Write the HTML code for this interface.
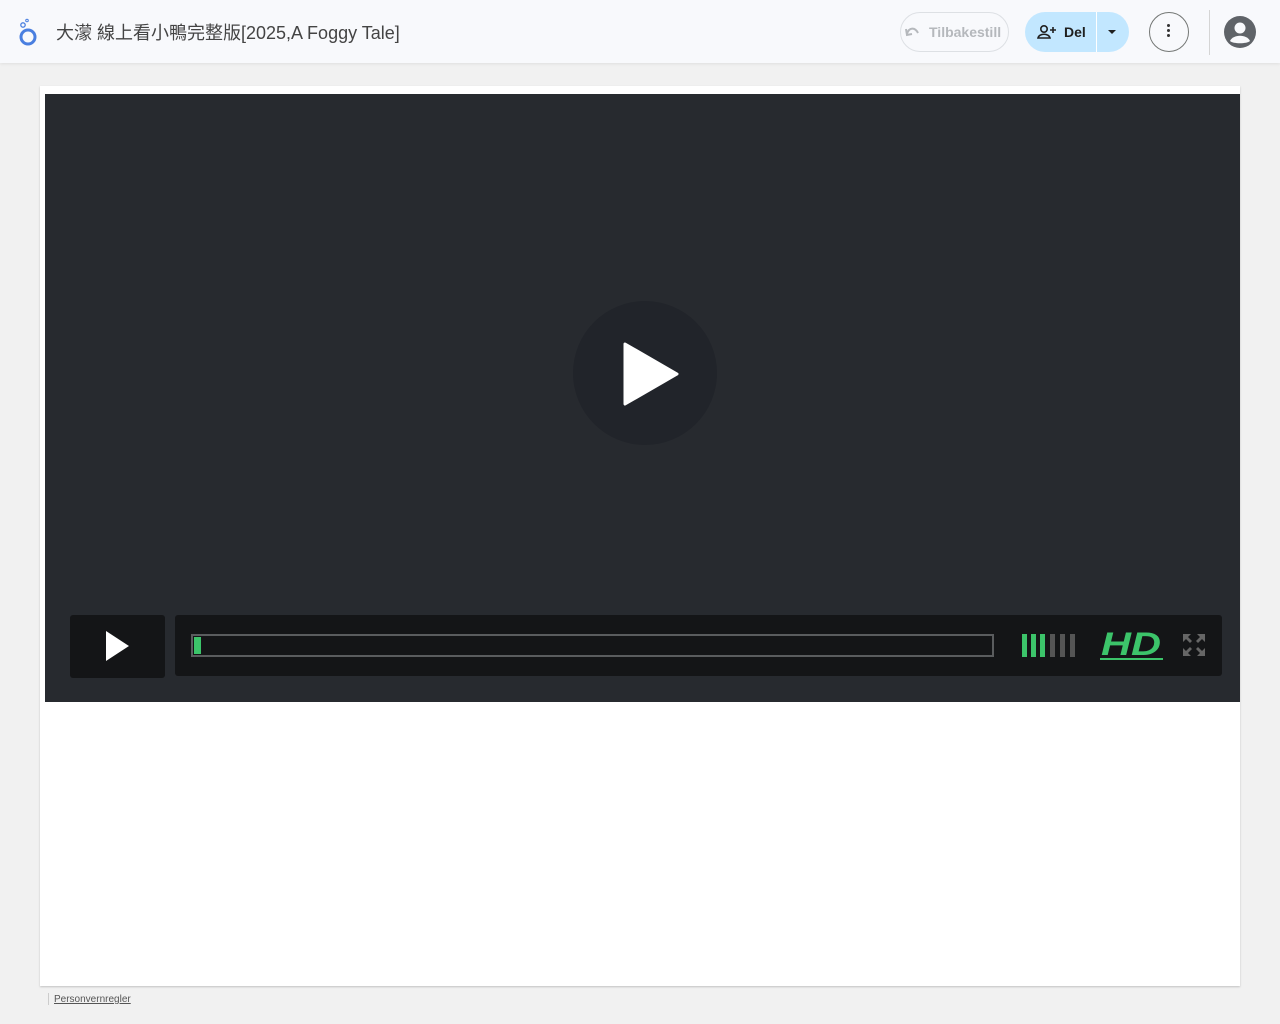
<!DOCTYPE html>
<html><head><meta charset="utf-8"><style>
body{margin:0;width:1280px;height:1024px;background:#f1f1f1;font-family:"Liberation Sans","Noto Sans CJK TC",sans-serif;position:relative;overflow:hidden}
.top{position:absolute;left:0;top:0;width:1280px;height:63px;background:#f8f9fc;box-shadow:0 1px 3px rgba(0,0,0,.08)}
.title{position:absolute;left:56px;top:19px;font-size:18px;color:#444}
.card{position:absolute;left:40px;top:86px;width:1200px;height:900px;background:#fff;box-shadow:0 1px 2px rgba(0,0,0,.2)}
.video{position:absolute;left:45px;top:94px;width:1195px;height:608px;background:#272a2f}
.abs{position:absolute}
</style></head><body>
<div class="top">
<svg class="abs" style="left:17px;top:17px" width="22" height="30" viewBox="0 0 22 30"><circle cx="11" cy="20" r="7" fill="none" stroke="#4a7fe0" stroke-width="3"/><circle cx="6" cy="8" r="2.2" fill="none" stroke="#4a7fe0" stroke-width="1.3"/><circle cx="10" cy="3.5" r="1.3" fill="none" stroke="#4a7fe0" stroke-width="1"/></svg>
<div class="title">大濛 線上看小鴨完整版[2025,A Foggy Tale]</div>
<div class="abs" style="left:900px;top:12px;width:109px;height:40px;border:1px solid #dde0e4;border-radius:20px;box-sizing:border-box;color:#b5b8bc;font-size:14px;font-weight:bold;line-height:38px;padding-left:28px">Tilbakestill</div>
<svg class="abs" style="left:904px;top:25px" width="16" height="12"><path d="M3 9 C5 2 11 2 14 8" stroke="#b5b8bc" stroke-width="2" fill="none"/><path d="M2 4 L3 10 L8 9" stroke="#b5b8bc" stroke-width="2" fill="none"/></svg>
<div class="abs" style="left:1025px;top:12px;width:104px;height:40px;background:#c2e7ff;border-radius:20px"></div>
<div class="abs" style="left:1096px;top:12px;width:1px;height:40px;background:#fff"></div>
<svg class="abs" style="left:1037px;top:23px" width="20" height="18"><circle cx="7" cy="6" r="3.2" fill="none" stroke="#1f1f1f" stroke-width="1.6"/><path d="M1 15 C2 10 12 10 13 15 Z" fill="none" stroke="#1f1f1f" stroke-width="1.6"/><path d="M16 4v6M13 7h6" stroke="#1f1f1f" stroke-width="1.6"/></svg>
<div class="abs" style="left:1064px;top:24px;font-size:14px;font-weight:bold;color:#1f1f1f">Del</div>
<div class="abs" style="left:1108px;top:30px;border-left:4px solid transparent;border-right:4px solid transparent;border-top:4px solid #1f1f1f"></div>
<div class="abs" style="left:1149px;top:12px;width:40px;height:40px;border:1px solid #747775;border-radius:50%;box-sizing:border-box"></div>
<div class="abs" style="left:1167px;top:24px;width:3px;height:3px;background:#333;border-radius:50%;box-shadow:0 5px 0 #333,0 10px 0 #333"></div>
<div class="abs" style="left:1209px;top:10px;width:1px;height:45px;background:#d5d5d5"></div>
<svg class="abs" style="left:1224px;top:16px" width="32" height="32" viewBox="0 0 32 32"><circle cx="16" cy="16" r="16" fill="#5f6368"/><circle cx="16" cy="12" r="5.5" fill="#f8f9fc"/><path d="M6 25 C9 18 23 18 26 25 C23 28 9 28 6 25Z" fill="#f8f9fc"/></svg>
</div>
<div class="card"></div>
<div class="video">
<div class="abs" style="left:528px;top:207px;width:144px;height:144px;border-radius:50%;background:#21242a"></div>
<svg class="abs" style="left:578px;top:248px" width="56" height="64"><path d="M2 2 L54 32 L2 62 Z" fill="#fff" stroke="#fff" stroke-width="3" stroke-linejoin="round"/></svg>
<div class="abs" style="left:25px;top:521px;width:95px;height:63px;background:#141517;border-radius:3px"></div>
<svg class="abs" style="left:60px;top:536px" width="26" height="32"><path d="M1 1 L24 16 L1 31Z" fill="#fff"/></svg>
<div class="abs" style="left:130px;top:521px;width:1047px;height:61px;background:#141517;border-radius:3px"></div>
<div class="abs" style="left:146px;top:540px;width:803px;height:23px;border:2px solid #5a5c5e;box-sizing:border-box"></div>
<div class="abs" style="left:149px;top:543px;width:7px;height:17px;background:#3cc46a"></div>
<div class="abs" style="left:977px;top:540px;width:5px;height:23px;background:#3cc46a;box-shadow:9px 0 0 #3cc46a,18px 0 0 #3cc46a,28px 0 0 #555,38px 0 0 #555,48px 0 0 #555"></div>
<svg class="abs" style="left:1054px;top:535px" width="66" height="32"><text x="2" y="26" font-family="Liberation Sans" font-weight="bold" font-style="italic" font-size="32" fill="#3cc46a" textLength="60" lengthAdjust="spacingAndGlyphs">HD</text><path d="M1 30 H64" stroke="#3cc46a" stroke-width="2"/></svg>
<svg class="abs" style="left:1137px;top:539px" width="24" height="24" fill="#666"><path d="M1 1h8l-3 3 4 4-2 2-4-4-3 3z M23 1h-8l3 3-4 4 2 2 4-4 3 3z M1 23h8l-3-3 4-4-2-2-4 4-3-3z M23 23h-8l3-3-4-4 2-2 4 4 3-3z"/></svg>
</div>
<div class="abs" style="left:48px;top:993px;width:1px;height:12px;background:#ccc"></div>
<div class="abs" style="left:54px;top:994px;font-size:10px;color:#555;text-decoration:underline">Personvernregler</div>
</body></html>
